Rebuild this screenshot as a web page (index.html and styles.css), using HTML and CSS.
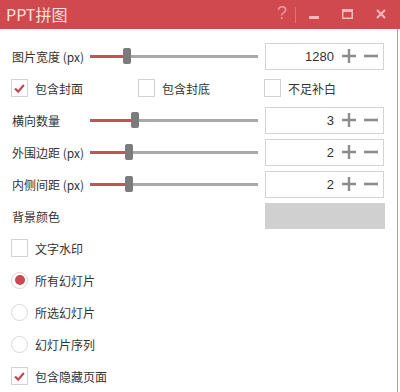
FILE: index.html
```html
<!DOCTYPE html>
<html lang="zh">
<head>
<meta charset="utf-8">
<title>PPT拼图</title>
<link rel="stylesheet" href="styles.css">
</head>
<body>
<div class="win">
  <div class="titlebar">
    <span class="title">PPT拼图</span>
    <div class="tb-btns">
      <span class="tb help">?</span>
      <span class="sep"></span>
      <span class="tb min"><svg width="10" height="3" viewBox="0 0 10 3"><rect x="0" y="0" width="10" height="3" fill="#f3b8b8"/></svg></span>
      <span class="tb max"><svg width="11" height="10" viewBox="0 0 11 10"><rect x="0.75" y="0.75" width="9.5" height="8.5" fill="none" stroke="#f3b8b8" stroke-width="1.5"/><rect x="0" y="0" width="11" height="3" fill="#f3b8b8"/></svg></span>
      <span class="tb close"><svg width="10" height="10" viewBox="0 0 10 10"><path d="M1 1 L9 9 M9 1 L1 9" stroke="#f3b8b8" stroke-width="2.2" fill="none"/></svg></span>
    </div>
  </div>
  <div class="body">
    <div class="row">
      <span class="label">图片宽度 (px)</span>
      <div class="slider"><span class="fill" style="width:33px"></span><span class="thumb"></span><span class="rest"></span></div>
      <div class="numbox"><span class="val">1280</span><svg class="plus" width="14" height="14" viewBox="0 0 14 14"><path d="M7 0 V14 M0 7 H14" stroke="#8c8c8c" stroke-width="2.4"/></svg><svg class="minus" width="14" height="14" viewBox="0 0 14 14"><path d="M0 7 H14" stroke="#8c8c8c" stroke-width="2.6"/></svg></div>
    </div>
    <div class="row checks">
      <label class="opt w127"><span class="box checked"><svg width="17" height="17" viewBox="0 0 17 17"><path d="M3.5 8.5 L7 12 L13.5 4.5" stroke="#c3424f" stroke-width="2.4" fill="none"/></svg></span>包含封面</label>
      <label class="opt w126"><span class="box"></span>包含封底</label>
      <label class="opt"><span class="box"></span>不足补白</label>
    </div>
    <div class="row">
      <span class="label">横向数量</span>
      <div class="slider"><span class="fill" style="width:41px"></span><span class="thumb"></span><span class="rest"></span></div>
      <div class="numbox"><span class="val">3</span><svg class="plus" width="14" height="14" viewBox="0 0 14 14"><path d="M7 0 V14 M0 7 H14" stroke="#8c8c8c" stroke-width="2.4"/></svg><svg class="minus" width="14" height="14" viewBox="0 0 14 14"><path d="M0 7 H14" stroke="#8c8c8c" stroke-width="2.6"/></svg></div>
    </div>
    <div class="row">
      <span class="label">外围边距 (px)</span>
      <div class="slider"><span class="fill" style="width:35px"></span><span class="thumb"></span><span class="rest"></span></div>
      <div class="numbox"><span class="val">2</span><svg class="plus" width="14" height="14" viewBox="0 0 14 14"><path d="M7 0 V14 M0 7 H14" stroke="#8c8c8c" stroke-width="2.4"/></svg><svg class="minus" width="14" height="14" viewBox="0 0 14 14"><path d="M0 7 H14" stroke="#8c8c8c" stroke-width="2.6"/></svg></div>
    </div>
    <div class="row">
      <span class="label">内侧间距 (px)</span>
      <div class="slider"><span class="fill" style="width:35px"></span><span class="thumb"></span><span class="rest"></span></div>
      <div class="numbox"><span class="val">2</span><svg class="plus" width="14" height="14" viewBox="0 0 14 14"><path d="M7 0 V14 M0 7 H14" stroke="#8c8c8c" stroke-width="2.4"/></svg><svg class="minus" width="14" height="14" viewBox="0 0 14 14"><path d="M0 7 H14" stroke="#8c8c8c" stroke-width="2.6"/></svg></div>
    </div>
    <div class="row">
      <span class="label wide">背景颜色</span>
      <div class="swatch"></div>
    </div>
    <div class="row checks">
      <label class="opt"><span class="box"></span>文字水印</label>
    </div>
    <div class="row checks">
      <label class="opt"><span class="radio on"><span class="dot"></span></span>所有幻灯片</label>
    </div>
    <div class="row checks">
      <label class="opt"><span class="radio"></span>所选幻灯片</label>
    </div>
    <div class="row checks">
      <label class="opt"><span class="radio"></span>幻灯片序列</label>
    </div>
    <div class="row checks">
      <label class="opt"><span class="box checked"><svg width="17" height="17" viewBox="0 0 17 17"><path d="M3.5 8.5 L7 12 L13.5 4.5" stroke="#c3424f" stroke-width="2.4" fill="none"/></svg></span>包含隐藏页面</label>
    </div>
  </div>
</div>
</body>
</html>
```

FILE: styles.css
```css
* { box-sizing: border-box; }
html, body {
  margin: 0;
  padding: 0;
  background: #fff;
}
body {
  width: 400px;
  height: 392px;
  overflow: hidden;
  font-family: "Noto Sans CJK SC", "Noto Sans", sans-serif;
  font-size: 12px;
  color: #333;
}
.win {
  width: 400px;
  height: 392px;
  display: flex;
  flex-direction: column;
}
.titlebar {
  height: 29px;
  background: #cf494f;
  display: flex;
  align-items: center;
  flex-shrink: 0;
}
.title {
  padding-left: 6px;
  font-size: 16px;
  color: #fbe2da;
  letter-spacing: 0;
  line-height: 29px;
}
.tb-btns {
  margin-left: auto;
  display: flex;
  align-items: center;
  height: 29px;
  padding-right: 8px;
}
.tb {
  display: flex;
  align-items: center;
  justify-content: center;
  height: 29px;
}
.help {
  width: 20px;
  font-family: "Liberation Sans", sans-serif;
  font-size: 18px;
  color: #eb9a9c;
  padding-bottom: 3px;
}
.sep {
  width: 1px;
  height: 16px;
  background: #dd7479;
  margin-left: 3px;
  margin-right: 6px;
}
.min { width: 24px; padding-top: 5px; }
.max { width: 24px; margin-left: 9px; padding-bottom: 2px; }
.close { width: 23px; margin-left: 10px; padding-bottom: 1px; }

.body {
  flex: 1;
  width: 398px;
  border-right: 1px solid #e19296;
  padding-top: 11px;
}
.row {
  height: 32px;
  display: flex;
  align-items: center;
  padding-left: 12px;
}
.label {
  width: 78px;
  white-space: nowrap;
}
.label.wide { width: 253px; }
.slider {
  width: 168px;
  height: 16px;
  display: flex;
  align-items: center;
}
.fill {
  height: 3px;
  background: #c9505b;
}
.thumb {
  width: 8px;
  height: 16px;
  border-radius: 2px;
  background: #7b7b7b;
}
.rest {
  flex: 1;
  height: 3px;
  background: #a9a9a9;
}
.numbox {
  margin-left: 7px;
  width: 119px;
  height: 27px;
  border: 1px solid #d4d4d4;
  display: flex;
  align-items: center;
  padding-right: 5px;
}
.val {
  flex: 1;
  text-align: right;
  font-family: "Liberation Sans", sans-serif;
  font-size: 13px;
  color: #333;
}
.plus { margin-left: 8px; }
.minus { margin-left: 8px; }
.swatch {
  width: 120px;
  height: 26px;
  background: #d1d0d1;
}
.checks { padding-left: 11px; }
.opt {
  display: flex;
  align-items: center;
  white-space: nowrap;
}
.w127 { width: 127px; }
.w126 { width: 126px; }
.box {
  width: 17px;
  height: 18px;
  border: 1px solid #d2d2d2;
  background: #fff;
  margin-right: 7px;
  display: flex;
  align-items: center;
  justify-content: center;
}
.radio {
  width: 17px;
  height: 17px;
  border-radius: 50%;
  border: 1px solid #d6d6d6;
  margin-right: 7px;
  display: flex;
  align-items: center;
  justify-content: center;
}
.dot {
  width: 10px;
  height: 10px;
  border-radius: 50%;
  background: #cc4852;
}
```
